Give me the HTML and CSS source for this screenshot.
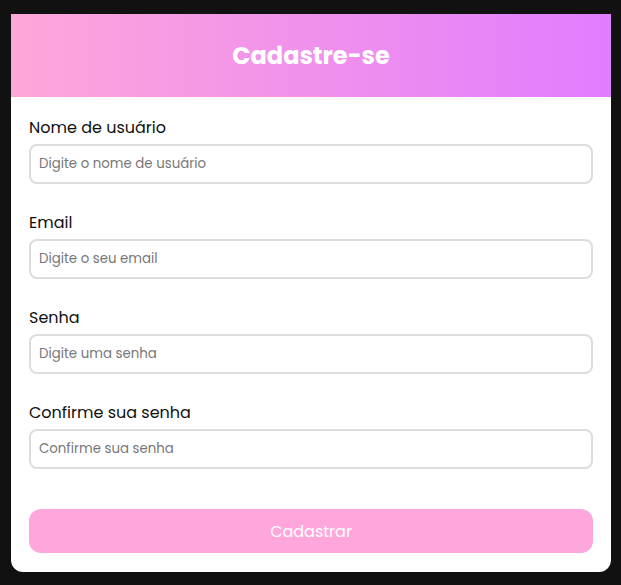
FILE: index.html
```html
<!DOCTYPE html>
<html lang="pt-BR">
<head>
<meta charset="utf-8">
<title>Cadastre-se</title>
<link rel="stylesheet" href="styles.css">
</head>
<body>
<div class="card">
  <div class="card-header">
    <h1 class="title">Cadastre-se</h1>
  </div>
  <form class="form">
    <div class="field">
      <label class="label" for="u">Nome de usuário</label>
      <input class="input" id="u" type="text" placeholder="Digite o nome de usuário">
    </div>
    <div class="field">
      <label class="label" for="e">Email</label>
      <input class="input" id="e" type="email" placeholder="Digite o seu email">
    </div>
    <div class="field">
      <label class="label" for="s">Senha</label>
      <input class="input" id="s" type="password" placeholder="Digite uma senha">
    </div>
    <div class="field">
      <label class="label" for="c">Confirme sua senha</label>
      <input class="input" id="c" type="password" placeholder="Confirme sua senha">
    </div>
    <button class="button" type="button">Cadastrar</button>
  </form>
</div>
</body>
</html>
```
FILE: styles.css
```css
* { box-sizing: border-box; }
html, body { margin: 0; padding: 0; }
body {
  background: #111111;
  font-family: "Poppins", "Open Sans", "DejaVu Sans", sans-serif;
  padding: 14px 10px 0 11px;
  height: 585px;
  overflow: hidden;
}
.card {
  width: 600px;
  background: #ffffff;
  border-radius: 0 0 12px 12px;
  overflow: hidden;
}
.card-header {
  height: 83px;
  background: linear-gradient(90deg, #ffa6d9 0%, #e27cff 100%);
  display: flex;
  align-items: center;
  justify-content: center;
}
.title {
  margin: 0;
  color: #ffffff;
  font-size: 24px;
  font-weight: 700;
}
.form {
  padding: 20px 18px 19px 18px;
  display: flex;
  flex-direction: column;
}
.field {
  display: flex;
  flex-direction: column;
  margin-bottom: 28px;
}
.label {
  font-size: 16px;
  line-height: 22px;
  color: #111111;
  margin-bottom: 5px;
}
.input {
  height: 40px;
  border: 2px solid #dddddd;
  border-radius: 8px;
  padding: 0 8px;
  font-family: inherit;
  font-size: 13.333px;
  color: #333;
  outline: none;
}
.input::placeholder { color: #777777; }
.button {
  margin-top: 12px;
  height: 44px;
  border: none;
  border-radius: 12px;
  background: #ffa6dd;
  color: #ffffff;
  font-family: inherit;
  font-size: 16px;
}
```
